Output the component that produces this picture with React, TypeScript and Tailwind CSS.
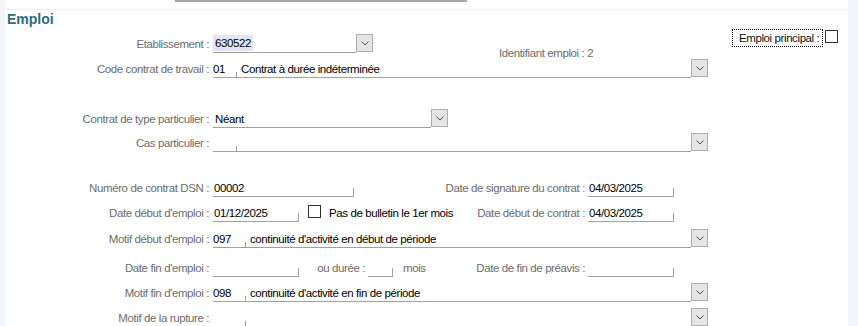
import React from "react";

function Chevron() {
  return (
    <svg width="8" height="5" viewBox="0 0 8 5" className="block">
      <polyline points="0.5,0.5 4,4 7.5,0.5" fill="none" stroke="#505050" strokeWidth="1" />
    </svg>
  );
}

function DropButton() {
  return (
    <div className="mb-[1px] flex h-[18px] w-[17px] shrink-0 items-center justify-center border border-[#adadad] bg-[#e5e5e5]">
      <Chevron />
    </div>
  );
}

function Label({ children, className = "w-[204px]" }: { children: React.ReactNode; className?: string }) {
  return (
    <div className={`${className} mb-[2px] flex shrink-0 justify-end whitespace-nowrap leading-[14px] text-[#6d6d6d]`}>
      {children}
    </div>
  );
}

function TextField({ value = "", className }: { value?: string; className: string }) {
  return (
    <div className={`${className} flex shrink-0 items-end border-b border-[#a0a0a0]`}>
      <span className="mb-[1px] flex-1 whitespace-nowrap pl-[1px] leading-[14px] text-black">{value}</span>
      <span className="h-[8px] w-px bg-[#a0a0a0]" />
    </div>
  );
}

function CodeCombo({ code = "", text = "", codeW }: { code?: string; text?: string; codeW: string }) {
  return (
    <>
      <div className="ml-[4px] flex w-[478px] shrink-0 items-end border-b border-[#a0a0a0]">
        <span className={`${codeW} mb-[1px] shrink-0 leading-[14px] text-black`}>{code}</span>
        <span className="h-[5px] w-px shrink-0 bg-[#a0a0a0]" />
        <span className="mb-[1px] whitespace-nowrap pl-[4px] leading-[14px] text-black">{text}</span>
      </div>
      <DropButton />
    </>
  );
}

function Checkbox({ className = "" }: { className?: string }) {
  return <div className={`${className} h-[13px] w-[13px] shrink-0 border border-[#333] bg-white`} />;
}

function RightDate({ label, value = "" }: { label: string; value?: string }) {
  return (
    <div className="ml-auto mr-[174px] flex items-end">
      <Label className="">{label}</Label>
      <TextField value={value} className="ml-[3px] w-[86px]" />
    </div>
  );
}

export default function App() {
  return (
    <div className="flex h-[326px] w-full overflow-hidden bg-white font-['Liberation_Sans',Arial,sans-serif] text-[11.5px] tracking-[-0.4px]">
      <div className="w-[5px] shrink-0 bg-[#f4f4fb]" />

      <div className="flex w-[843px] shrink-0 flex-col">
        <div className="h-[10px] shrink-0 border-b border-[#efefef]">
          <div className="ml-[170px] h-[2px] w-[292px] bg-[#a8a8a8]" />
        </div>

        <div className="h-[18px] shrink-0 pl-[2px] pt-[1px] text-[14px] font-bold leading-[17px] tracking-normal text-[#2b6c80]">
          Emploi
        </div>

        {/* Etablissement */}
        <div className="flex h-[25px] shrink-0 items-end">
          <Label>Etablissement :</Label>
          <div className="ml-[4px] flex w-[143px] shrink-0 items-end border-b border-[#a0a0a0]">
            <span className="mb-[1px] bg-[#e4e4f6] px-[2px] py-px leading-[14px] text-black">630522</span>
          </div>
          <DropButton />
          <div className="mb-[-7px] ml-[126px] whitespace-nowrap leading-[14px] text-[#6d6d6d]">
            Identifiant emploi : 2
          </div>
          <div className="ml-auto mr-[10px] mt-[1px] flex items-start self-start">
            <div className="flex h-[18px] w-[91px] items-center whitespace-nowrap border border-dotted border-black pl-[6px] leading-[14px] text-[#111]">
              Emploi principal :
            </div>
            <Checkbox className="ml-[2px] mt-[1px]" />
          </div>
        </div>

        {/* Code contrat */}
        <div className="flex h-[25px] shrink-0 items-end">
          <Label>Code contrat de travail :</Label>
          <CodeCombo code="01" text="Contrat à durée indéterminée" codeW="w-[23px]" />
        </div>

        {/* Contrat de type particulier */}
        <div className="flex h-[50px] shrink-0 items-end">
          <Label>Contrat de type particulier :</Label>
          <div className="ml-[4px] flex w-[218px] shrink-0 items-end border-b border-[#a0a0a0]">
            <span className="mb-[1px] pl-[2px] leading-[14px] text-black">Néant</span>
          </div>
          <DropButton />
        </div>

        {/* Cas particulier */}
        <div className="flex h-[24px] shrink-0 items-end">
          <Label>Cas particulier :</Label>
          <CodeCombo codeW="w-[23px]" />
        </div>

        {/* DSN + signature */}
        <div className="flex h-[45px] shrink-0 items-end">
          <Label>Numéro de contrat DSN :</Label>
          <TextField value="00002" className="ml-[4px] w-[141px]" />
          <RightDate label="Date de signature du contrat :" value="04/03/2025" />
        </div>

        {/* Date début emploi */}
        <div className="flex h-[25px] shrink-0 items-end">
          <Label>Date début d'emploi :</Label>
          <TextField value="01/12/2025" className="ml-[4px] w-[86px]" />
          <Checkbox className="mb-[4px] ml-[9px]" />
          <div className="mb-[2px] ml-[8px] whitespace-nowrap leading-[14px] text-black">Pas de bulletin le 1er mois</div>
          <RightDate label="Date début de contrat :" value="04/03/2025" />
        </div>

        {/* Motif début */}
        <div className="flex h-[26px] shrink-0 items-end">
          <Label>Motif début d'emploi :</Label>
          <CodeCombo code="097" text="continuité d'activité en début de période" codeW="w-[32px]" />
        </div>

        {/* Date fin */}
        <div className="flex h-[29px] shrink-0 items-end">
          <Label>Date fin d'emploi :</Label>
          <TextField className="ml-[4px] w-[86px]" />
          <Label className="w-[66px]">ou durée :</Label>
          <TextField className="ml-[3px] w-[25px]" />
          <div className="mb-[2px] ml-[10px] leading-[14px] text-[#6d6d6d]">mois</div>
          <RightDate label="Date de fin de préavis :" />
        </div>

        {/* Motif fin */}
        <div className="flex h-[25px] shrink-0 items-end">
          <Label>Motif fin d'emploi :</Label>
          <CodeCombo code="098" text="continuité d'activité en fin de période" codeW="w-[32px]" />
        </div>

        {/* Motif rupture */}
        <div className="flex h-[25px] shrink-0 items-end">
          <Label>Motif de la rupture :</Label>
          <CodeCombo codeW="w-[32px]" />
        </div>
      </div>

      <div className="flex-1 bg-[#f4f4fb]" />
    </div>
  );
}
